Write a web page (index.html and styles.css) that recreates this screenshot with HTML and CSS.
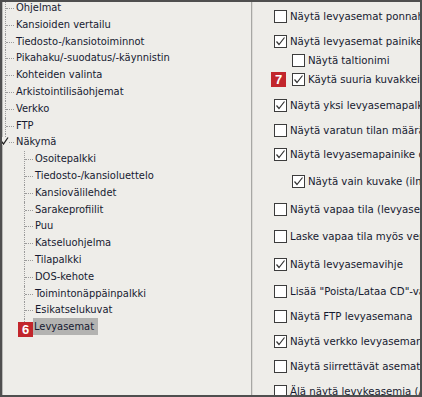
FILE: index.html
```html
<!DOCTYPE html>
<html lang="fi">
<head>
	<meta charset="utf-8">
	<title>Asetukset – Levyasemat</title>
	<link rel="stylesheet" href="styles.css">
</head>
<body>

<div class="window">
	<div class="tree">
		<div class="node">Ohjelmat</div>
		<div class="node">Kansioiden vertailu</div>
		<div class="node">Tiedosto-/kansiotoiminnot</div>
		<div class="node">Pikahaku/-suodatus/-käynnistin</div>
		<div class="node">Kohteiden valinta</div>
		<div class="node">Arkistointilisäohjemat</div>
		<div class="node">Verkko</div>
		<div class="node">FTP</div>
		<div class="node last">
			<svg class="tick" width="8" height="8" viewBox="0 0 8 8"><path d="M0.5 4.5 L2.5 7 L7 0.5" fill="none" stroke="#222" stroke-width="1.3"/></svg>
			Näkymä
		</div>
		<div class="node sub">Osoitepalkki</div>
		<div class="node sub">Tiedosto-/kansioluettelo</div>
		<div class="node sub">Kansiovälilehdet</div>
		<div class="node sub">Sarakeprofiilit</div>
		<div class="node sub">Puu</div>
		<div class="node sub">Katseluohjelma</div>
		<div class="node sub">Tilapalkki</div>
		<div class="node sub">DOS-kehote</div>
		<div class="node sub">Toimintonäppäinpalkki</div>
		<div class="node sub">Esikatselukuvat</div>
		<div class="node sub last">
			<span class="badge badge-six">6</span>
			<span class="selected">Levyasemat</span>
		</div>
	</div>

	<div class="options">
		<div class="opt first"><span class="box"></span>Näytä levyasemat ponnahdusvalikossa</div>
		<div class="opt"><span class="box checked"></span>Näytä levyasemat painikepalkissa</div>
		<div class="opt sub tight"><span class="box"></span>Näytä taltionimi</div>
		<div class="opt sub tight">
			<span class="badge badge-seven">7</span>
			<span class="box checked"></span>Käytä suuria kuvakkeita
		</div>
		<div class="opt wide"><span class="box checked"></span>Näytä yksi levyasemapalkki jokaiselle ruudulle</div>
		<div class="opt"><span class="box"></span>Näytä varatun tilan määrä</div>
		<div class="opt narrow"><span class="box checked"></span>Näytä levyasemapainike osoitepalkissa</div>
		<div class="opt sub loose"><span class="box checked"></span>Näytä vain kuvake (ilman nimeä)</div>
		<div class="opt looser"><span class="box"></span>Näytä vapaa tila (levyasemapalkissa)</div>
		<div class="opt loose"><span class="box"></span>Laske vapaa tila myös verkkoasemille</div>
		<div class="opt looser"><span class="box checked"></span>Näytä levyasemavihje</div>
		<div class="opt loose"><span class="box"></span>Lisää "Poista/Lataa CD"-valikko</div>
		<div class="opt"><span class="box"></span>Näytä FTP levyasemana</div>
		<div class="opt"><span class="box checked"></span>Näytä verkko levyasemana</div>
		<div class="opt"><span class="box"></span>Näytä siirrettävät asemat</div>
		<div class="opt"><span class="box"></span>Älä näytä levykeasemia (A:, B:)</div>
	</div>
</div>

</body>
</html>
```

FILE: styles.css
```css
body {
	margin: 0;
	font-family: "DejaVu Sans", sans-serif;
	font-size: 11px;
	color: #161a30;
}

.window {
	display: flex;
	width: 422px;
	height: 397px;
	box-sizing: border-box;
	border: 2px solid #4f4f4f;
	background: #eeede9;
	overflow: hidden;
}

/* tree */

.tree {
	width: 249px;
	flex: none;
	margin-top: -2px;
	border-left: 1px solid #b9b9b6;
	box-sizing: border-box;
	font-stretch: condensed;
}

.node {
	position: relative;
	height: 16.8px;
	line-height: 16.8px;
	padding-left: 13px;
	white-space: nowrap;
}

.node::before {
	content: "";
	position: absolute;
	left: 2px;
	top: 0;
	bottom: 0;
	border-left: 1px dotted #9a9a9a;
}

.node.last::before {
	bottom: 8px;
}

.node::after {
	content: "";
	position: absolute;
	left: 3px;
	top: 8px;
	width: 8px;
	border-top: 1px dotted #9a9a9a;
}

.node.sub {
	padding-left: 32px;
}

.node.sub::before {
	left: 21px;
}

.node.sub::after {
	left: 22px;
}

.tick {
	position: absolute;
	left: -2px;
	top: 3px;
	z-index: 1;
	background: #eeede9;
}

.selected {
	background: #b3b3b1;
	padding: 2px 4px 2px 1px;
	margin-left: -2px;
}

.badge {
	position: absolute;
	width: 15px;
	height: 15px;
	background: #c2262c;
	color: #fff;
	font-family: "Liberation Sans", sans-serif;
	font-stretch: normal;
	font-weight: bold;
	font-size: 13px;
	line-height: 15px;
	text-align: center;
	z-index: 2;
}

.badge-six {
	left: 15px;
	top: 3px;
}

.badge-seven {
	left: 19px;
	top: 2px;
}

/* options */

.options {
	flex: 1;
	min-width: 0;
	border-left: 1px solid #a7a7a4;
	box-shadow: inset 1px 0 0 #dcdbd7;
	font-size: 10.2px;
}

.opt {
	position: relative;
	display: flex;
	align-items: center;
	gap: 3px;
	height: 19px;
	margin-top: 6px;
	padding-left: 22px;
	white-space: nowrap;
}

.opt.first {
	margin-top: 5px;
}

.opt.sub {
	padding-left: 40px;
}

.opt.tight {
	margin-top: 0;
}

.opt.narrow {
	margin-top: 5px;
}

.opt.wide {
	margin-top: 7px;
}

.opt.loose {
	margin-top: 8px;
}

.opt.looser {
	margin-top: 9px;
}

.box {
	flex: none;
	width: 11px;
	height: 11px;
	border: 1px solid #3c3c3c;
	background: #fff;
}

.box.checked {
	background: #fff url("data:image/svg+xml,%3Csvg xmlns='http://www.w3.org/2000/svg' width='11' height='11'%3E%3Cpath d='M1.5 5.5 L4 8.5 L9.5 1.5' fill='none' stroke='%23333' stroke-width='1.2'/%3E%3C/svg%3E") no-repeat;
}
```
